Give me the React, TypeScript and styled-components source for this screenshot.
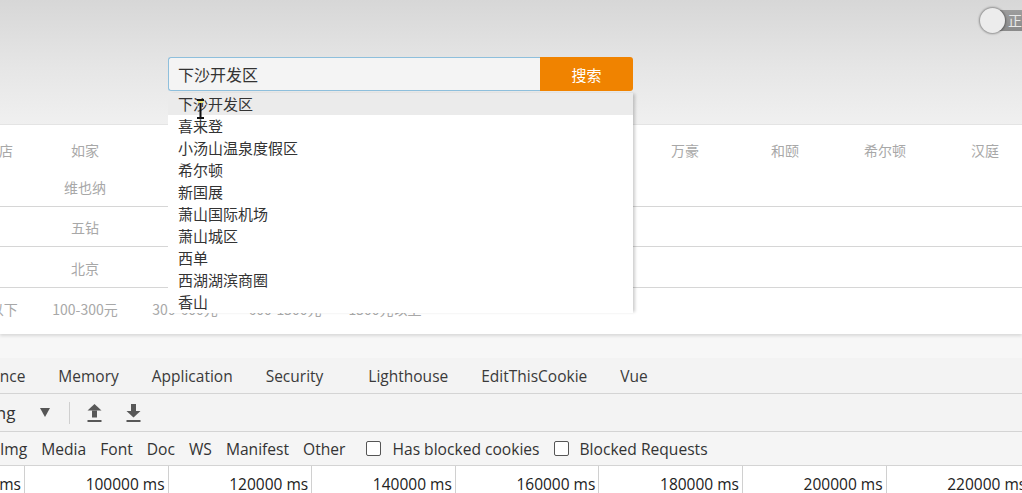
import React from "react";
import styled, { createGlobalStyle } from "styled-components";

const Global = createGlobalStyle`
  html, body { margin: 0; padding: 0; }
  body { width: 1022px; height: 493px; overflow: hidden; background: #f7f7f7; }
  #root { width: 1022px; height: 493px; }
`;

const Page = styled.div`
  width: 1022px;
  height: 493px;
  overflow: hidden;
  display: flex;
  flex-direction: column;
  font-family: "Noto Sans CJK SC", "Noto Sans", sans-serif;
`;

const Header = styled.div`
  height: 124px;
  flex: none;
  display: flex;
  align-items: flex-start;
  background: linear-gradient(#d7d7d7 0%, #e6e6e6 55%, #f0f0f0 100%);
  position: relative;
  z-index: 2;
`;

const SearchWrap = styled.div`
  position: relative;
  margin: 57px 0 0 168px;
  display: flex;
  width: 465px;
  height: 34px;
`;

const SearchInput = styled.div`
  flex: 1;
  box-sizing: border-box;
  border: 1px solid #8ebfdc;
  border-right: none;
  border-radius: 3px 0 0 3px;
  background: #f4f4f4;
  padding-left: 9px;
  display: flex;
  align-items: center;
  font-size: 16px;
  color: #333;
`;

const SearchButton = styled.div`
  width: 93px;
  background: #f08300;
  border-radius: 0 3px 3px 0;
  color: #fff;
  font-size: 15px;
  display: flex;
  align-items: center;
  justify-content: center;
`;

const Dropdown = styled.div`
  position: absolute;
  top: 36px;
  left: 0;
  width: 465px;
  background: #fff;
  box-shadow: 3px 0 3px -1px rgba(0, 0, 0, 0.2);
  z-index: 5;
`;

const Option = styled.div<{ $active?: boolean }>`
  height: 22px;
  line-height: 22px;
  padding-left: 10px;
  font-size: 15px;
  color: #333;
  background: ${(p) => (p.$active ? "#ebebeb" : "#fff")};
`;

const Cursor = styled.svg`
  position: absolute;
  left: 28px;
  top: 6px;
`;

const Toggle = styled.div`
  margin: 7px -14px 0 auto;
  width: 56px;
  height: 26px;
  position: relative;
  display: flex;
  align-items: center;
`;

const TogglePill = styled.div`
  position: absolute;
  left: 8px;
  right: 0;
  top: 3px;
  height: 21px;
  border-radius: 11px;
  background: linear-gradient(#9d9d9d, #8a8a8a);
  color: #e8e8e8;
  font-size: 14px;
  line-height: 21px;
  padding-left: 20px;
`;

const ToggleKnob = styled.div`
  position: relative;
  width: 25px;
  height: 25px;
  border-radius: 50%;
  background: #ececec;
  box-shadow: 0 0 2px 1px rgba(0, 0, 0, 0.35);
`;

const Panel = styled.div`
  flex: none;
  background: #fff;
  border-top: 1px solid #e4e4e4;
  box-shadow: 0 2px 3px rgba(0, 0, 0, 0.12);
  position: relative;
  z-index: 1;
  overflow: hidden;
`;

const Row = styled.div<{ $h: number; $pt: number; $last?: boolean }>`
  display: flex;
  height: ${(p) => p.$h}px;
  box-sizing: border-box;
  padding-top: ${(p) => p.$pt}px;
  margin-left: -65px;
  border-bottom: ${(p) => (p.$last ? "none" : "1px solid #d6d6d6")};
`;

const Label = styled.div`
  width: 100px;
  flex: none;
  height: 37px;
  line-height: 37px;
  text-align: center;
  font-size: 14px;
  color: #a8a8a8;
`;

const Items = styled.div`
  width: 1000px;
  flex: none;
  display: flex;
  flex-wrap: wrap;
  align-content: flex-start;
`;

const Item = styled.div`
  width: 100px;
  height: 37px;
  line-height: 37px;
  text-align: center;
  font-size: 14px;
  color: #a8a8a8;
  white-space: nowrap;
`;

const Gap = styled.div`
  height: 24px;
  flex: none;
  background: #f7f7f7;
`;

const Dev = styled.div`
  flex: 1;
  display: flex;
  flex-direction: column;
  font-family: "Open Sans", "Noto Sans", sans-serif;
  color: #333;
  background: #fff;
`;

const TabBar = styled.div`
  height: 36px;
  box-sizing: border-box;
  display: flex;
  align-items: center;
  background: #f3f3f3;
  border-bottom: 1px solid #d4d4d4;
  margin-left: -85px;
  font-size: 15.5px;
  color: #3a3a3a;
`;

const Tab = styled.div<{ $extra?: number }>`
  padding: 0 16.5px;
  margin-left: ${(p) => p.$extra || 0}px;
  white-space: nowrap;
`;

const Toolbar = styled.div`
  height: 38px;
  box-sizing: border-box;
  display: flex;
  align-items: center;
  background: #f3f3f3;
  border-bottom: 1px solid #d4d4d4;
  font-size: 17px;
  color: #333;
  margin-left: -86px;
`;

const ToolText = styled.span`
  padding-bottom: 1px;
`;

const Caret = styled.span`
  width: 0;
  height: 0;
  border-left: 5px solid transparent;
  border-right: 5px solid transparent;
  border-top: 9px solid #555;
  margin-left: 25px;
`;

const Sep = styled.div`
  width: 1px;
  height: 22px;
  background: #cfcfcf;
  margin: 0 16px 0 19px;
`;

const IconBtn = styled.div`
  width: 17px;
  height: 20px;
  display: flex;
  align-items: center;
  justify-content: center;
  margin-right: 22px;
`;

const FilterBar = styled.div`
  height: 34px;
  box-sizing: border-box;
  display: flex;
  align-items: center;
  gap: 14px;
  background: #f5f5f5;
  border-bottom: 1px solid #d4d4d4;
  font-size: 15.6px;
  color: #333;
  white-space: nowrap;
`;

const FilterGroup = styled.span<{ $first?: boolean }>`
  display: flex;
  align-items: center;
  margin-left: ${(p) => (p.$first ? 7 : 0)}px;
`;

const Check = styled.span`
  display: inline-block;
  width: 13px;
  height: 13px;
  border: 1px solid #555;
  border-radius: 2px;
  background: #fff;
  margin-right: 11px;
`;

const Timeline = styled.div`
  display: flex;
  margin-left: -118.6px;
  height: 36px;
  background: #fff;
`;

const Tick = styled.div`
  width: 143.6px;
  flex: none;
  box-sizing: border-box;
  border-right: 1px solid #d0d0d0;
  text-align: right;
  padding-right: 3px;
  font-size: 15.5px;
  line-height: 36px;
  white-space: nowrap;
  color: #222;
`;

const options = [
  "下沙开发区",
  "喜来登",
  "小汤山温泉度假区",
  "希尔顿",
  "新国展",
  "萧山国际机场",
  "萧山城区",
  "西单",
  "西湖湖滨商圈",
  "香山",
];

const brands = ["如家", "七天", "锦江之星", "全季", "桔子", "亚朵", "万豪", "和颐", "希尔顿", "汉庭", "维也纳"];
const prices = ["100元以下", "100-300元", "300-600元", "600-1500元", "1500元以上"];
const tabs = ["Performance", "Memory", "Application", "Security", "Lighthouse", "EditThisCookie", "Vue"];
const filters = ["Img", "Media", "Font", "Doc", "WS", "Manifest", "Other"];
const ticks = ["80000 ms", "100000 ms", "120000 ms", "140000 ms", "160000 ms", "180000 ms", "200000 ms", "220000 ms"];

const ArrowIcon = ({ down }: { down?: boolean }) => (
  <svg width="17" height="20" viewBox="0 0 17 20">
    <g fill="#585858">
      {down ? (
        <>
          <rect x="6" y="1" width="5" height="7" />
          <polygon points="1.5,8 15.5,8 8.5,14.5" />
        </>
      ) : (
        <>
          <polygon points="8.5,1 15.5,7.5 1.5,7.5" />
          <rect x="6" y="7.5" width="5" height="7" />
        </>
      )}
      <rect x="1.5" y="17" width="14" height="2" />
    </g>
  </svg>
);

export default function App() {
  return (
    <>
      <Global />
      <Page>
        <Header>
          <SearchWrap>
            <SearchInput>下沙开发区</SearchInput>
            <SearchButton>搜索</SearchButton>
            <Dropdown>
              {options.map((o, i) => (
                <Option key={o} $active={i === 0}>
                  {o}
                </Option>
              ))}
              <Cursor width="9" height="20" viewBox="0 0 9 20">
                <path d="M1 1h7M4.5 1v18M1 19h7" stroke="#111" strokeWidth="2" fill="none" />
                <rect x="2" y="2" width="5" height="2" fill="#e8e070" />
              </Cursor>
            </Dropdown>
          </SearchWrap>
          <Toggle>
            <TogglePill>正常</TogglePill>
            <ToggleKnob />
          </Toggle>
        </Header>
        <Panel>
          <Row $h={82} $pt={7}>
            <Label>快捷酒店</Label>
            <Items>
              {brands.map((b) => (
                <Item key={b}>{b}</Item>
              ))}
            </Items>
          </Row>
          <Row $h={40} $pt={2}>
            <Label>星级</Label>
            <Items>
              <Item>五钻</Item>
            </Items>
          </Row>
          <Row $h={41} $pt={3}>
            <Label>城市</Label>
            <Items>
              <Item>北京</Item>
            </Items>
          </Row>
          <Row $h={46} $pt={3} $last>
            <Items>
              {prices.map((p) => (
                <Item key={p}>{p}</Item>
              ))}
            </Items>
          </Row>
        </Panel>
        <Gap />
        <Dev>
          <TabBar>
            {tabs.map((t) => (
              <Tab key={t} $extra={t === "Lighthouse" ? 12 : 0}>
                {t}
              </Tab>
            ))}
          </TabBar>
          <Toolbar>
            <ToolText>No throttling</ToolText>
            <Caret />
            <Sep />
            <IconBtn>
              <ArrowIcon />
            </IconBtn>
            <IconBtn>
              <ArrowIcon down />
            </IconBtn>
          </Toolbar>
          <FilterBar>
            {filters.map((f) => (
              <span key={f}>{f}</span>
            ))}
            <FilterGroup $first>
              <Check />
              Has blocked cookies
            </FilterGroup>
            <FilterGroup>
              <Check />
              Blocked Requests
            </FilterGroup>
          </FilterBar>
          <Timeline>
            {ticks.map((t) => (
              <Tick key={t}>{t}</Tick>
            ))}
          </Timeline>
        </Dev>
      </Page>
    </>
  );
}
